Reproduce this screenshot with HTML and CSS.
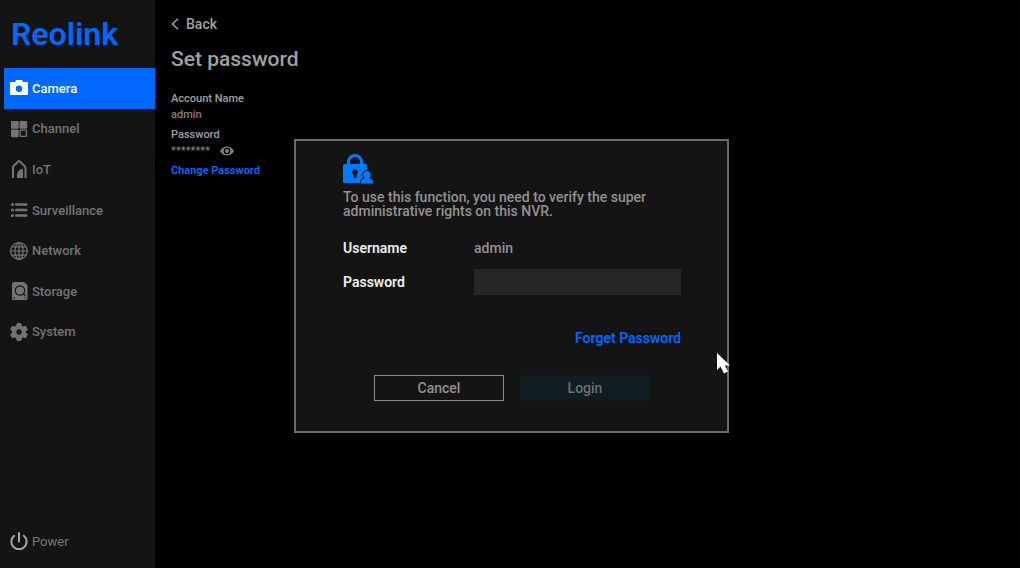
FILE: index.html
```html
<!DOCTYPE html>
<html lang="en">
<head>
  <meta charset="UTF-8">
  <meta name="viewport" content="width=device-width, initial-scale=1.0">
  <title>Reolink - Set password</title>
  <link rel="stylesheet" href="styles.css">
</head>
<body>

  <aside class="sidebar">
    <div class="logo">Reolink</div>

    <nav class="menu">
      <a href="#camera" class="active">
        <svg class="icon" viewBox="0 0 18 18"><path fill="currentColor" fill-rule="evenodd" d="M6 1h6l1 2h4a1 1 0 0 1 1 1v11a1 1 0 0 1-1 1H1a1 1 0 0 1-1-1V4a1 1 0 0 1 1-1h4zM9 6.5a3.2 3.2 0 1 0 0 6.4a3.2 3.2 0 0 0 0-6.4z"/></svg>
        Camera
      </a>
      <a href="#channel">
        <svg class="icon" viewBox="0 0 18 18"><g fill="currentColor"><rect x="1" y="1" width="7.7" height="7.7" rx="1"/><rect x="9.5" y="1" width="7.7" height="7.7" rx="1"/><rect x="1" y="9.5" width="7.7" height="7.7" rx="1"/></g><rect x="10.2" y="10.2" width="6.2" height="6.2" rx=".5" fill="none" stroke="currentColor" stroke-width="1.3"/></svg>
        Channel
      </a>
      <a href="#iot">
        <svg class="icon" viewBox="0 0 18 18"><path fill="none" stroke="currentColor" stroke-width="2" d="M3 18V7.500Q3 6.500 3.700 5.800L8.200 1.500Q9 .8 9.800 1.500L14.300 5.800Q15.500 6.800 15.500 8V18"/><path fill="currentColor" d="M7 18v-2.500a7 7 0 0 1 6-7V18z"/></svg>
        IoT
      </a>
      <a href="#surveillance">
        <svg class="icon" viewBox="0 0 18 18"><g fill="currentColor"><circle cx="2.5" cy="3.5" r="1.6"/><circle cx="2.5" cy="9" r="1.6"/><circle cx="2.5" cy="14.500" r="1.6"/><rect x="5" y="2.300" width="12.500" height="2.400" rx="1"/><rect x="5" y="7.800" width="12.500" height="2.400" rx="1"/><rect x="5" y="13.300" width="12.500" height="2.400" rx="1"/></g></svg>
        Surveillance
      </a>
      <a href="#network">
        <svg class="icon" viewBox="0 0 18 18"><g fill="none" stroke="currentColor" stroke-width="1.2"><circle cx="9" cy="9" r="8.3"/><ellipse cx="9" cy="9" rx="4" ry="8.3"/><path d="M9 .7v16.6M.7 9h16.6M2 4.8h14M2 13.2h14"/></g></svg>
        Network
      </a>
      <a href="#storage">
        <svg class="icon" viewBox="0 0 18 18"><path fill="currentColor" d="M4 0h10L17.500 3v13.500a1.500 1.500 0 0 1-1.500 1.500H3.500A1.500 1.500 0 0 1 2 16.500V2a2 2 0 0 1 2-2z"/><g fill="none" stroke="#141414" stroke-width="1.200"><circle cx="10" cy="8.500" r="4.700"/><path d="M13.200 11.700l2.300 2.300"/></g><circle cx="4.300" cy="16" r=".7" fill="#141414"/><circle cx="15.200" cy="16" r=".7" fill="#141414"/></svg>
        Storage
      </a>
      <a href="#system">
        <svg class="icon" viewBox="0 0 18 18"><path fill="currentColor" stroke="currentColor" stroke-linejoin="round" fill-rule="evenodd" d="M7.200 .5h3.600l.6 2.600 1.700 1 2.500-.8 1.800 3.200-1.900 1.700v1.600l1.900 1.700-1.800 3.200-2.500-.8-1.700 1-.6 2.600H7.200l-.6-2.600-1.700-1-2.500.8-1.800-3.200 1.900-1.700V8.200L.6 6.500l1.800-3.200 2.500.8 1.700-1zM9 5.800a3.200 3.200 0 1 0 0 6.400a3.200 3.200 0 0 0 0-6.400z"/></svg>
        System
      </a>
    </nav>

    <button type="button" class="power">
      <svg class="icon" viewBox="0 0 18 18"><path fill="none" stroke="currentColor" stroke-width="2" stroke-linecap="round" d="M9 1v8.500M4.200 3.800a7.600 7.600 0 1 0 9.600 0"/></svg>
      <span>Power</span>
    </button>
  </aside>

  <main class="content">
    <a href="#back" class="back">
      <svg viewBox="0 0 8 12"><path fill="none" stroke="currentColor" stroke-width="1.4" d="M7 .8L1.500 6 7 11.200"/></svg>
      Back
    </a>
    <h1>Set password</h1>

    <dl class="account">
      <dt>Account Name</dt>
      <dd>admin</dd>
      <dt>Password</dt>
      <dd>
        <span>********</span>
        <button type="button" class="eye" aria-label="Show password">
          <svg viewBox="0 0 14 10"><path fill="currentColor" fill-rule="evenodd" d="M0 5Q2.500.4 7 .4T14 5Q11.500 9.600 7 9.600T0 5zM7 1.700a3.300 3.300 0 1 0 0 6.600a3.300 3.300 0 0 0 0-6.600z"/><circle cx="7" cy="5" r="2" fill="currentColor"/></svg>
        </button>
      </dd>
    </dl>
    <a href="#change" class="change">Change Password</a>
  </main>

  <div class="overlay">
    <form class="dialog" role="dialog" aria-label="Verify administrator">
      <svg class="lock" viewBox="0 0 30 30">
        <path fill="none" stroke="currentColor" stroke-width="3" d="M5.500 11V8a6.500 6.500 0 0 1 13 0V11"/>
        <rect x="0" y="10" width="24" height="19" rx="1.500" fill="currentColor"/>
        <path fill="#141414" d="M12 15a3.100 3.100 0 0 1 1.500 5.700V24h-3v-3.300A3.100 3.100 0 0 1 12 15z"/>
        <path fill="currentColor" stroke="#141414" stroke-width="2" paint-order="stroke" d="M18 29.500v-1.500q0-3 4-4a3.800 3.800 0 1 1 4 0q4 1 4 4v1.500z"/>
      </svg>
      <p>To use this function, you need to verify the super administrative rights on this NVR.</p>

      <div class="row">
        <span class="label">Username</span>
        <span>admin</span>
      </div>
      <div class="row">
        <label class="label" for="password">Password</label>
        <input type="password" id="password" name="password">
      </div>

      <a href="#forget" class="forget">Forget Password</a>

      <div class="buttons">
        <button type="button" class="cancel">Cancel</button>
        <button type="submit" class="login" disabled>Login</button>
      </div>

      <svg class="cursor" viewBox="0 0 13 21"><path fill="#fff" d="M0 0v17l3.500-3.500L7 20.500l4-2-3.200-6H13z"/></svg>
    </form>
  </div>

</body>
</html>
```

FILE: styles.css
```css
* {
  box-sizing: border-box;
}

body {
  margin: 0;
  min-height: 100vh;
  display: flex;
  background-color: #000;
  color: #929292;
  font-family: Roboto, "Liberation Sans", sans-serif;
  font-size: 14px;
  font-weight: 500;
}

a {
  color: inherit;
  text-decoration: none;
}

button {
  font: inherit;
  color: inherit;
  border: none;
  background: none;
  padding: 0;
}

/* sidebar */
.sidebar {
  width: 155px;
  padding: 16px 0 7px 4px;
  display: flex;
  flex-direction: column;
  background-color: #141414;
  color: #747474;
  font-size: 13px;
}

.logo {
  height: 36px;
  margin-bottom: 16px;
  padding-left: 7px;
  line-height: 36px;
  font-size: 32px;
  font-weight: 600;
  color: #0068ff;
}

.menu {
  height: 284px;
  display: flex;
  flex-direction: column;
}

.menu a,
.power {
  flex: 1;
  display: flex;
  align-items: center;
  gap: 4px;
  padding-left: 6px;
}

.menu .active {
  background-color: #0068ff;
  color: #fff;
}

.icon {
  width: 18px;
  height: 18px;
}

.power {
  flex: none;
  height: 40px;
  margin-top: auto;
  font-weight: 400;
}

.power .icon {
  color: #a8a8a8;
}

/* page */
.content {
  flex: 1;
  padding: 15px 16px;
  color: #a0a0a0;
}

.back {
  display: flex;
  align-items: center;
  gap: 7px;
  line-height: 18px;
}

.back svg {
  width: 8px;
  height: 12px;
}

h1 {
  margin: 12px 0 18px;
  line-height: 28px;
  font-size: 21px;
  font-weight: 500;
}

.account {
  margin: 0;
  font-size: 11px;
  line-height: 16px;
}

.account dd {
  display: flex;
  align-items: center;
  gap: 10px;
  margin: 0 0 4px;
  color: #808080;
}

.eye {
  display: flex;
}

.eye svg {
  width: 14px;
  height: 10px;
}

.change {
  display: inline-block;
  vertical-align: top;
  font-size: 11px;
  font-weight: 600;
  line-height: 16px;
  color: #0068ff;
}

/* verify dialog */
.overlay {
  position: fixed;
  inset: 0;
  padding: 4px 0 0 3px;
  display: flex;
  align-items: center;
  justify-content: center;
}

.dialog {
  position: relative;
  width: 435px;
  padding: 13px 46px 30px 47px;
  border: 2px solid #6b6b6b;
  background-color: #141414;
}

.lock {
  display: block;
  width: 30px;
  height: 30px;
  color: #007bff;
}

.dialog p {
  margin: 6px 0 17px;
  line-height: 14px;
}

.row {
  display: grid;
  grid-template-columns: 131px 1fr;
  align-items: center;
  height: 26px;
  margin-bottom: 8px;
}

.label {
  font-weight: 600;
  color: #eee;
}

.row input {
  width: 100%;
  height: 26px;
  padding: 0 8px;
  border: none;
  background-color: #262626;
  color: #eee;
}

.forget {
  display: block;
  margin: 34px 0 28px;
  line-height: 18px;
  text-align: right;
  font-weight: 600;
  color: #0068ff;
}

.buttons {
  display: flex;
  justify-content: center;
  gap: 16px;
}

.buttons button {
  width: 130px;
  height: 26px;
}

.cancel {
  border: 1px solid #8a8a8a;
}

.login {
  background-color: #0f1d20;
  color: #6f6f6f;
}

/* mouse pointer over the dialog edge */
.cursor {
  position: absolute;
  right: -3px;
  top: 212px;
  width: 13px;
  height: 21px;
}
```
